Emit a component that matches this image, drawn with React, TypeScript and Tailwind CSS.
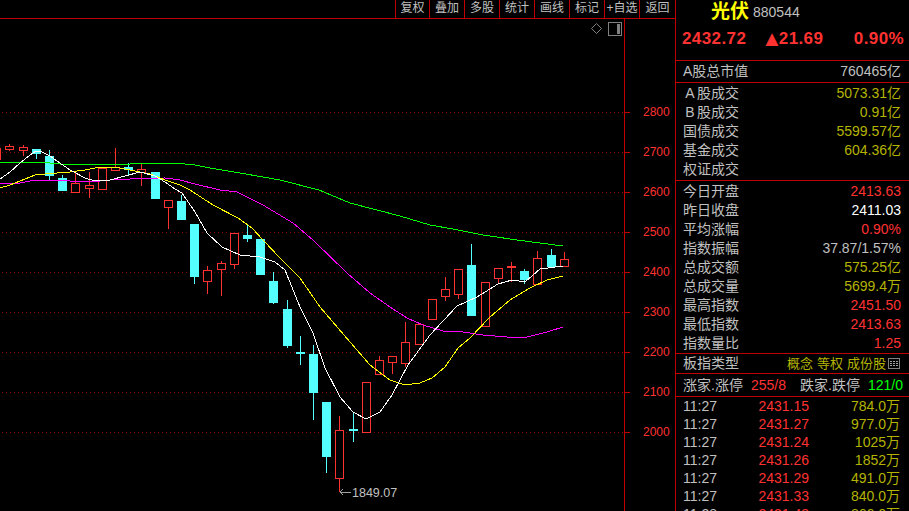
import React from 'react';

// left, body top, body bottom, high, low, up (hollow red) or down (cyan)
type Candle = [number, number, number, number, number, boolean];

const candles: Candle[] = [
  [5, 146, 149, 144, 151, true],
  [19, 147, 150, 145, 156, true],
  [32, 149, 154, 149, 159, false],
  [45, 156, 176, 150, 180, false],
  [58, 178, 191, 175, 191, false],
  [71, 183, 192, 171, 192, true],
  [85, 185, 188, 172, 198, true],
  [98, 168, 189, 168, 189, true],
  [111, 167, 170, 148, 170, true],
  [124, 167, 170, 163, 175, false],
  [137, 169, 172, 164, 186, true],
  [151, 172, 199, 172, 199, false],
  [164, 200, 207, 200, 229, true],
  [177, 201, 220, 195, 220, false],
  [190, 224, 277, 224, 284, false],
  [203, 270, 281, 266, 294, true],
  [217, 263, 269, 261, 296, true],
  [230, 233, 264, 233, 269, true],
  [243, 235, 239, 225, 242, false],
  [256, 239, 275, 239, 275, false],
  [269, 281, 303, 272, 304, false],
  [283, 309, 346, 300, 348, false],
  [296, 352, 354, 336, 365, false],
  [309, 354, 393, 345, 420, false],
  [322, 402, 457, 402, 473, false],
  [335, 430, 478, 416, 492, true],
  [349, 429, 431, 412, 442, false],
  [362, 382, 432, 382, 433, true],
  [375, 360, 374, 356, 374, true],
  [388, 356, 362, 356, 374, true],
  [401, 342, 363, 322, 367, true],
  [415, 324, 344, 324, 344, true],
  [428, 299, 319, 299, 320, true],
  [441, 289, 296, 277, 301, true],
  [454, 269, 294, 269, 299, true],
  [467, 265, 316, 244, 316, false],
  [481, 282, 326, 282, 326, true],
  [494, 268, 278, 268, 284, true],
  [507, 266, 267, 262, 282, true],
  [520, 271, 280, 269, 284, false],
  [533, 258, 284, 251, 284, true],
  [547, 255, 267, 249, 267, false],
  [560, 259, 266, 252, 266, true],
];

const whiteLine =
  '0,179 10,172 20,163 30,155 36,151 42,152 50,156 57,161 70,170 85,178 95,181 110,180 125,176 140,172 155,176 165,182 175,189 182,193 195,212 207,233 222,247 240,255 260,257 275,262 285,270 300,307 313,333 325,368 340,397 353,412 366,419 380,412 392,395 408,365 430,335 457,306 477,297 498,284 512,280 525,282 540,269 563,266';
const yellowLine =
  '0,188 10,185 25,179 35,175 45,174 70,172 85,170 100,167 115,167 130,170 150,174 165,180 180,185 190,190 213,205 238,218 252,228 263,240 280,258 300,278 320,307 350,342 370,365 390,380 405,385 420,383 432,378 445,367 458,348 470,338 490,317 510,300 530,288 547,280 563,276';
const magentaLine =
  '0,183 20,183 30,181 50,180 70,181 90,182 110,180 130,179 165,178 180,180 195,184 220,190 237,192 263,205 293,223 313,240 347,273 370,293 390,307 407,318 423,325 443,331 463,332 483,335 507,337 527,337 547,332 563,327';
const greenLine =
  '0,162 40,162 60,164 130,164 135,163 175,163 195,165 210,168 240,173 280,180 319,190 350,203 400,216 430,225 453,229 483,235 517,240 563,246';

const gridY = [112, 152, 192, 232, 272, 312, 352, 392, 432];
const axisLabels = ['2800', '2700', '2600', '2500', '2400', '2300', '2200', '2100', '2000'];
const tools = ['复权', '叠加', '多股', '统计', '画线', '标记', '+自选', '返回'];

const RED = 'text-[#ff3232]';
const OLIVE = 'text-[#b4b400]';
const GRAY = 'text-[#c0c0c0]';

const turnover = [
  { label: 'A', rest: '股成交', value: '5073.31亿' },
  { label: 'B', rest: '股成交', value: '0.91亿' },
  { label: '国债成交', value: '5599.57亿' },
  { label: '基金成交', value: '604.36亿' },
  { label: '权证成交', value: '' },
];

const stats = [
  { label: '今日开盘', value: '2413.63', color: RED },
  { label: '昨日收盘', value: '2411.03', color: 'text-white' },
  { label: '平均涨幅', value: '0.90%', color: RED },
  { label: '指数振幅', value: '37.87/1.57%', color: GRAY },
  { label: '总成交额', value: '575.25亿', color: OLIVE },
  { label: '总成交量', value: '5699.4万', color: OLIVE },
  { label: '最高指数', value: '2451.50', color: RED },
  { label: '最低指数', value: '2413.63', color: RED },
  { label: '指数量比', value: '1.25', color: RED },
];

const trades = [
  ['11:27', '2431.15', '784.0万'],
  ['11:27', '2431.27', '977.0万'],
  ['11:27', '2431.24', '1025万'],
  ['11:27', '2431.26', '1852万'],
  ['11:27', '2431.29', '491.0万'],
  ['11:27', '2431.33', '840.0万'],
  ['11:28', '2431.43', '866.0万'],
];

const KLine: React.FC = () => (
  <svg width={624} height={492} viewBox="0 19 624 492" shapeRendering="crispEdges" className="block">
    {gridY.map(y => (
      <line key={y} x1={2} x2={624} y1={y + 0.5} y2={y + 0.5} stroke="#800000" strokeDasharray="1 3" />
    ))}
    <line x1={0.5} x2={0.5} y1={148} y2={160} stroke="#ff3232" />
    {candles.map(([left, top, bottom, high, low, up]) => {
      const color = up ? '#ff3232' : '#54ffff';
      const wickX = left + 4.5;
      return (
        <g key={left}>
          <line x1={wickX} x2={wickX} y1={high} y2={top} stroke={color} />
          <line x1={wickX} x2={wickX} y1={bottom} y2={low} stroke={color} />
          {up ? (
            <rect x={left + 0.5} y={top + 0.5} width={8} height={bottom - top} fill="#000" stroke={color} />
          ) : (
            <rect x={left} y={top} width={9} height={bottom - top} fill={color} />
          )}
        </g>
      );
    })}
    <polyline points={greenLine} fill="none" stroke="#00ff00" />
    <polyline points={magentaLine} fill="none" stroke="#ff00ff" />
    <polyline points={yellowLine} fill="none" stroke="#ffff00" />
    <polyline points={whiteLine} fill="none" stroke="#ffffff" />
    {/* low marker */}
    <line x1={340} x2={351} y1={492.5} y2={492.5} stroke="#a0a0a0" />
    <polyline points="343,489 340,492 343,495" fill="none" stroke="#a0a0a0" />
    <polygon points="596.5,23.5 601.5,28.5 596.5,33.5 591.5,28.5" fill="none" stroke="#808080" shapeRendering="auto" />
    <rect x={608.5} y={22.5} width={13} height={13} fill="none" stroke="#808080" />
    <rect x={617} y={24} width={3} height={10} fill="#808080" />
  </svg>
);

export default function App() {
  return (
    <div className="flex h-[511px] w-[909px] overflow-hidden bg-black font-['Liberation_Sans','Noto_Sans_CJK_SC',sans-serif] text-[14px] text-[#c0c0c0]">
      <div className="flex w-[676px] shrink-0 flex-col border-r border-[#c00000]">
        <div className="flex h-[19px] shrink-0 justify-end border-b border-[#c00000]">
          <div className="flex h-full">
            {tools.map((tool, i) => (
              <div
                key={tool}
                className={`flex h-full items-center justify-center overflow-hidden whitespace-nowrap border-l border-[#c00000] pb-[3px] text-[12px] ${
                  i === 7 ? 'w-[36px]' : i === 0 ? 'w-[34px]' : 'w-[35px]'
                }`}
              >
                {tool}
              </div>
            ))}
          </div>
        </div>
        <div className="relative flex min-h-0 flex-1">
          <div className="w-[625px] shrink-0 border-r border-[#c00000]">
            <KLine />
          </div>
          <div className="flex-1 pt-[73px]">
            {axisLabels.map(label => (
              <div key={label} className="flex h-[40px] items-center">
                <span className="h-px w-[5px] bg-[#c00000]" />
                <span className={`ml-[13px] text-[12px] ${RED}`}>{label}</span>
              </div>
            ))}
          </div>
          <span className="absolute left-[352px] top-[466px] text-[12.5px] leading-[16px]">1849.07</span>
        </div>
      </div>

      <div className="flex min-w-0 flex-1 flex-col">
        <div className="h-[61px] shrink-0 border-b border-[#c00000]">
          <div className="flex h-[23px] items-center pl-[35px]">
            <span className="text-[19px] font-bold leading-none text-[#ffff00]">光伏</span>
            <span className="ml-[4px] mt-[2px] text-[14px]">880544</span>
          </div>
          <div className={`mt-[6px] flex items-center pl-[6px] pr-[5px] text-[17px] font-bold leading-[20px] tracking-[0.4px] ${RED}`}>
            <span className="w-[79px]">2432.72</span>
            <span className="text-[22px] leading-[20px] tracking-normal">▲</span>
            <span className="ml-[-4px]">21.69</span>
            <span className="ml-auto">0.90%</span>
          </div>
        </div>

        <div className="flex h-[22px] shrink-0 items-center justify-between border-b border-[#c00000] pl-[7px] pr-[8px]">
          <span>A股总市值</span>
          <span>760465亿</span>
        </div>

        <div className="h-[98px] shrink-0 border-b border-[#c00000] pt-[1px]">
          {turnover.map(row => (
            <div key={row.label} className="flex h-[19px] items-center justify-between pl-[7px] pr-[8px]">
              <span className="flex">
                {row.rest && <span className="w-[14px] text-center">{row.label}</span>}
                {row.rest ?? row.label}
              </span>
              <span className={OLIVE}>{row.value}</span>
            </div>
          ))}
        </div>

        <div className="h-[173px] shrink-0 border-b border-[#c00000] pt-[1px]">
          {stats.map(row => (
            <div key={row.label} className="flex h-[19px] items-center justify-between pl-[7px] pr-[8px]">
              <span>{row.label}</span>
              <span className={row.color}>{row.value}</span>
            </div>
          ))}
        </div>

        <div className="flex h-[20px] shrink-0 items-center border-b border-[#c00000] pl-[7px] pr-[9px]">
          <span>板指类型</span>
          <span className={`ml-auto flex gap-[4px] text-[13px] ${OLIVE}`}>
            <span>概念</span>
            <span>等权</span>
            <span>成份股</span>
          </span>
          <svg width={12} height={11} viewBox="0 0 12 11" shapeRendering="crispEdges" className="ml-[2px]">
            <rect x={0.5} y={0.5} width={11} height={10} fill="none" stroke="#808080" />
            <path d="M2 3h2M5 3h2M8 3h2M2 5h2M5 5h2M8 5h2M2 7h2M5 7h2M8 7h2" stroke="#a0a0a0" />
          </svg>
        </div>

        <div className="flex h-[23px] shrink-0 items-center border-b border-[#c00000] pl-[7px]">
          <span className="w-[68px]">涨家.涨停</span>
          <span className={`w-[49px] ${RED}`}>255/8</span>
          <span className="w-[68px]">跌家.跌停</span>
          <span className="text-[#00ff00]">121/0</span>
        </div>

        <div>
          {trades.map((row, i) => (
            <div key={i} className="flex h-[18px] items-center pl-[7px] pr-[9px]">
              <span className="w-[48px]">{row[0]}</span>
              <span className={`w-[78px] text-right ${RED}`}>{row[1]}</span>
              <span className={`flex-1 text-right ${OLIVE}`}>{row[2]}</span>
            </div>
          ))}
        </div>
      </div>
    </div>
  );
}
